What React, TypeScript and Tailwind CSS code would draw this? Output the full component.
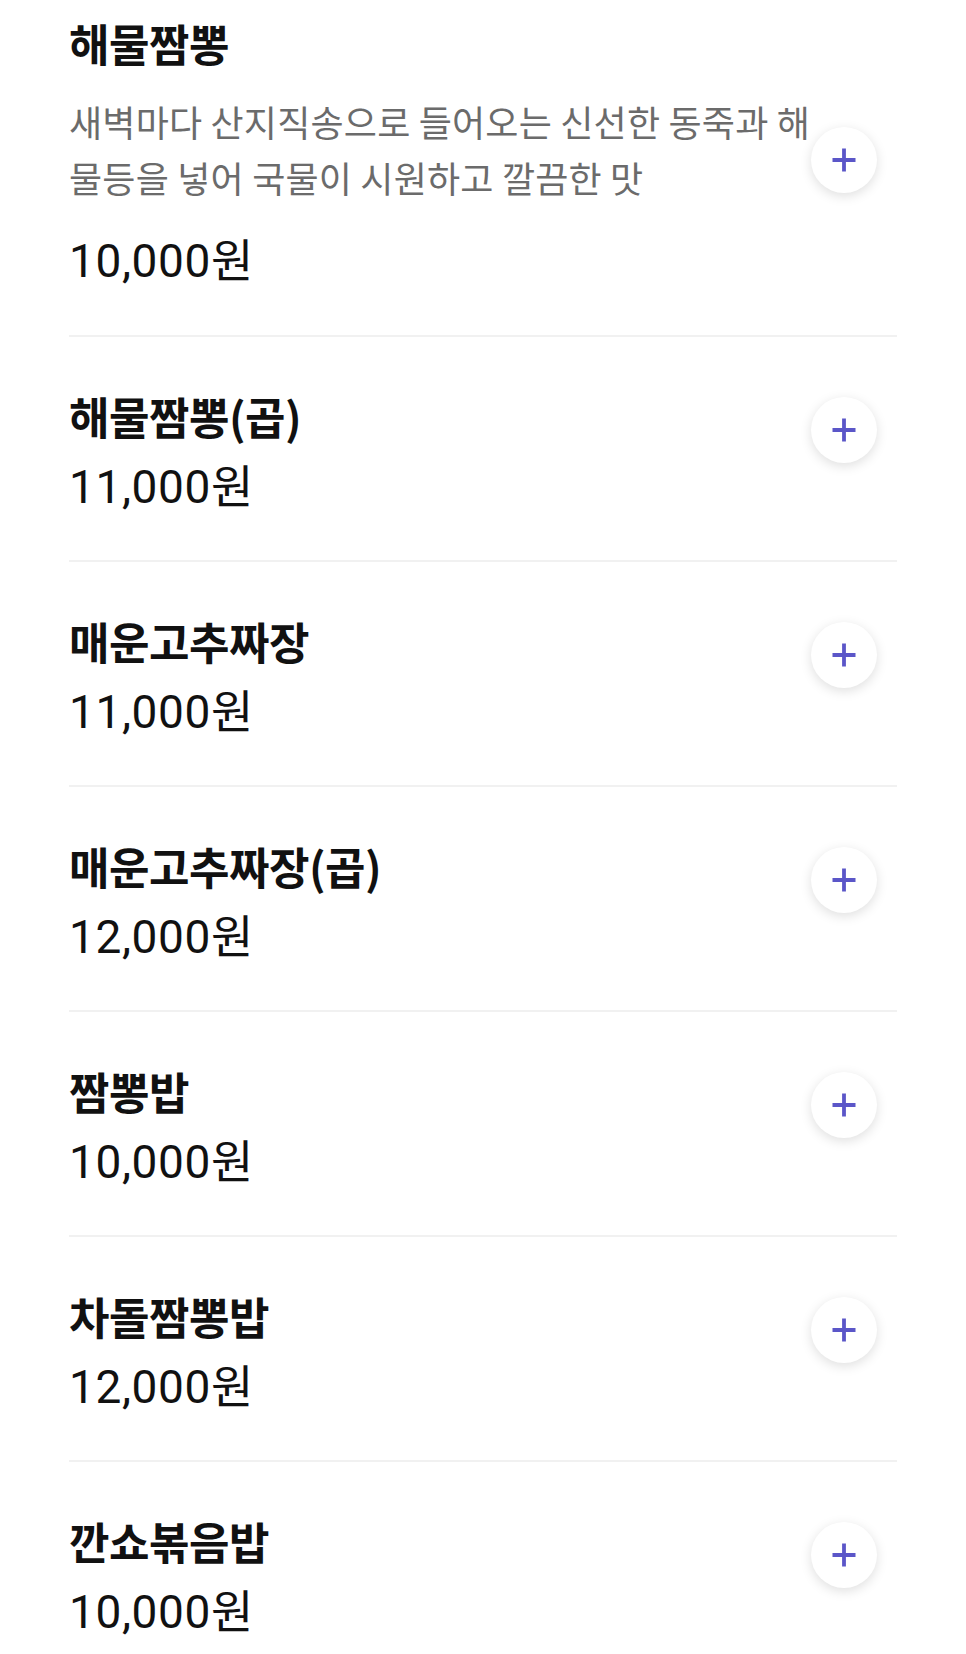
import React from "react";

type Item = { name: string; desc?: string; price: string };

const items: Item[] = [
  {
    name: "해물짬뽕",
    desc: "새벽마다 산지직송으로 들어오는 신선한 동죽과 해물등을 넣어 국물이 시원하고 깔끔한 맛",
    price: "10,000원",
  },
  { name: "해물짬뽕(곱)", price: "11,000원" },
  { name: "매운고추짜장", price: "11,000원" },
  { name: "매운고추짜장(곱)", price: "12,000원" },
  { name: "짬뽕밥", price: "10,000원" },
  { name: "차돌짬뽕밥", price: "12,000원" },
  { name: "깐쇼볶음밥", price: "10,000원" },
];

function PlusButton({ withDesc }: { withDesc: boolean }) {
  return (
    <div
      className={
        "flex h-[66px] w-[66px] shrink-0 items-center justify-center rounded-full bg-white shadow-[0_3px_12px_rgba(0,0,0,0.13)] " +
        (withDesc ? "mt-[109px]" : "mt-[6px]")
      }
    >
      <svg width="26" height="26" viewBox="0 0 26 26">
        <path d="M13 1.5V24.5M1.5 13H24.5" stroke="#5b56c8" strokeWidth="3.8" strokeLinecap="butt" />
      </svg>
    </div>
  );
}

export default function App() {
  return (
    <div
      className="min-h-[1654px] w-[966px] bg-white"
      style={{ fontFamily: '"Noto Sans CJK KR", "Noto Sans", sans-serif' }}
    >
      <div className="flex flex-col px-[69px]">
        {items.map((it, i) => (
          <div
            key={i}
            className={
              "flex justify-between border-b-2 border-[#f1f1f1] " +
              (i === 0 ? "pt-[18px] pb-[49px]" : "pt-[54px] pb-[48px]")
            }
          >
            <div className="flex min-w-0 flex-col">
              <div className="h-[50px] text-[44px] font-bold leading-[50px] tracking-[-0.5px] whitespace-nowrap text-[#111]">
                {it.name}
              </div>
              {it.desc && (
                <div className="mt-[25px] w-[760px] text-[36px] leading-[56px] tracking-[0.2px] text-[#6b6b6b]">
                  {it.desc}
                </div>
              )}
              <div
                className={
                  "h-[50px] text-[46px] leading-[50px] tracking-[0.6px] text-[#111] " +
                  (it.desc ? "mt-[31px]" : "mt-[21px]")
                }
                style={{ fontFamily: 'Roboto, "Noto Sans CJK KR", sans-serif' }}
              >
                {it.price}
              </div>
            </div>
            <div className="mr-[20px] shrink-0">
              <PlusButton withDesc={!!it.desc} />
            </div>
          </div>
        ))}
      </div>
    </div>
  );
}
